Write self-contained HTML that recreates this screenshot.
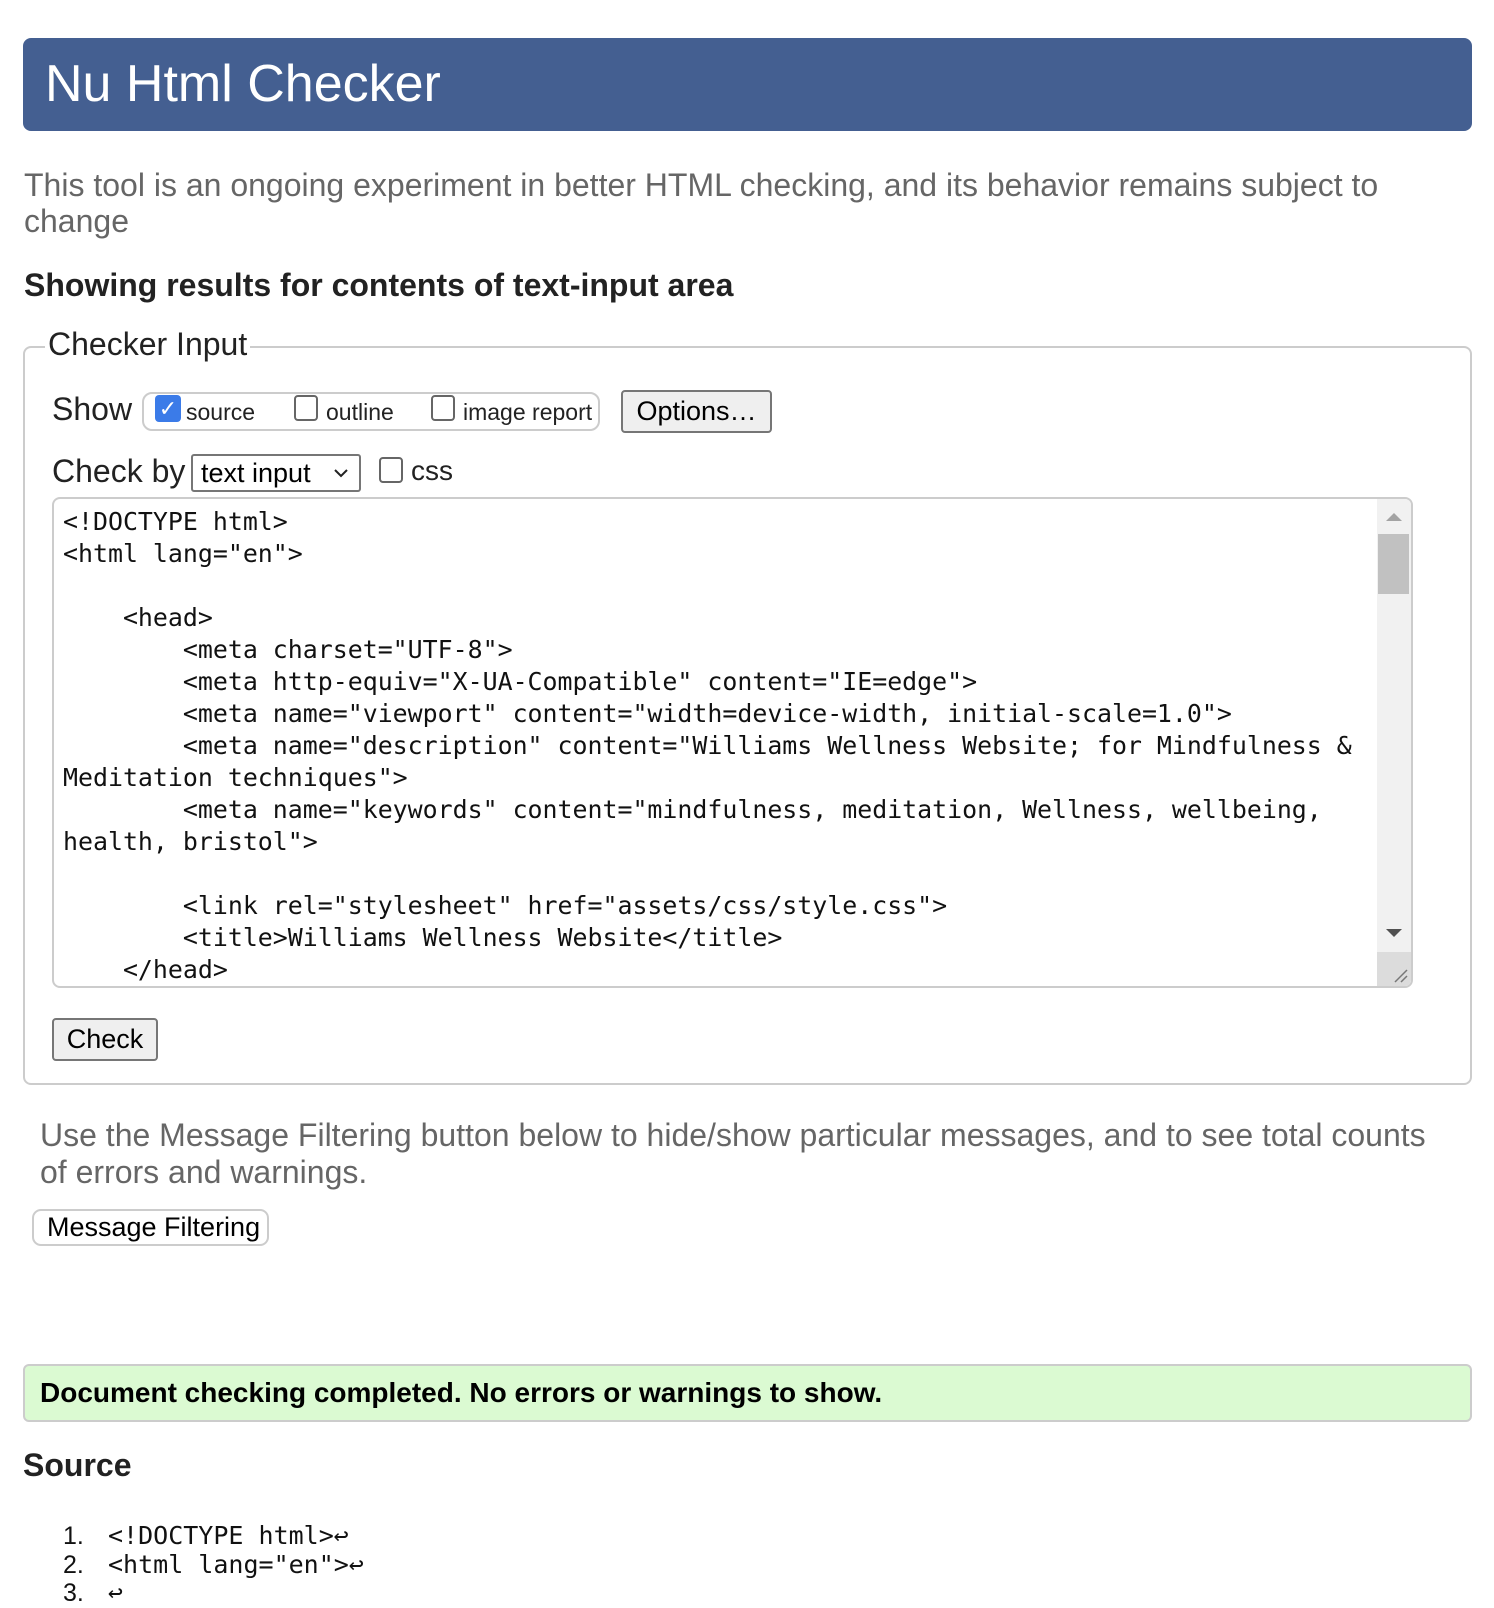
<!DOCTYPE html>
<html><head><meta charset="utf-8"><style>
*{box-sizing:border-box;margin:0;padding:0}
body{width:1494px;height:1594px;overflow:hidden;background:#fff;font-family:"Liberation Sans",Arial,sans-serif;color:#111;position:relative}
.a{position:absolute;white-space:nowrap}
.hdr{left:23px;top:38px;width:1449px;height:93px;background:#445f91;border-radius:8px;color:#fff;font-size:52px;padding-left:22px;line-height:93px}
.mono{font-family:"DejaVu Sans Mono","Liberation Mono",monospace}
.cb{display:inline-block;width:24px;height:26px;border:2px solid #666;border-radius:4px;vertical-align:middle;background:#fff}
.btn{background:#efefef;border:2px solid #767676;border-radius:4px;text-align:center;color:#000}
</style></head><body>
<div class="a hdr">Nu Html Checker</div>
<div class="a" style="left:24px;top:167px;font-size:32px;color:#666;line-height:36px;white-space:normal;width:1420px">This tool is an ongoing experiment in better HTML checking, and its behavior remains subject to change</div>
<div class="a" style="left:24px;top:267px;font-size:32px;font-weight:bold;color:#222">Showing results for contents of text-input area</div>
<div class="a" style="left:23px;top:346px;width:1449px;height:739px;border:2px solid #ccc;border-radius:8px"></div>
<div class="a" style="left:45px;top:326px;background:#fff;padding:0 3px;font-size:32px;color:#222">Checker Input</div>
<div class="a" style="left:52px;top:391px;font-size:32px;color:#222">Show</div>
<div class="a" style="left:142px;top:392px;width:458px;height:39px;border:2px solid #ccc;border-radius:10px"></div>
<div class="a" style="left:155px;top:395px;width:26px;height:27px;background:#3b7be8;border-radius:4px;color:#fff;font-size:22px;text-align:center;line-height:27px">✓</div>
<div class="a" style="left:186px;top:399px;font-size:23px;color:#222">source</div>
<div class="a" style="left:294px;top:395px"><span class="cb"></span></div>
<div class="a" style="left:326px;top:399px;font-size:23px;color:#222">outline</div>
<div class="a" style="left:431px;top:395px"><span class="cb"></span></div>
<div class="a" style="left:463px;top:399px;font-size:23px;color:#222">image report</div>
<div class="a btn" style="left:621px;top:390px;width:151px;height:43px;font-size:27px;line-height:39px">Options…</div>
<div class="a" style="left:52px;top:453px;font-size:32px;color:#222">Check by</div>
<div class="a" style="left:191px;top:454px;width:170px;height:38px;border:2px solid #767676;border-radius:3px;font-size:27px;line-height:34px;padding-left:8px;color:#000">text input<svg style="position:absolute;right:10px;top:12px" width="16" height="10" viewBox="0 0 16 10"><path d="M2 2l6 6 6-6" stroke="#222" stroke-width="2" fill="none"/></svg></div>
<div class="a" style="left:379px;top:457px"><span class="cb"></span></div>
<div class="a" style="left:411px;top:455px;font-size:28px;color:#222">css</div>
<div class="a" style="left:52px;top:497px;width:1361px;height:491px;border:2px solid #ccc;border-radius:8px;overflow:hidden">
<pre class="mono" style="position:absolute;left:9px;top:7px;font-size:24.9px;line-height:32px;color:#111">&lt;!DOCTYPE html&gt;
&lt;html lang="en"&gt;

    &lt;head&gt;
        &lt;meta charset="UTF-8"&gt;
        &lt;meta http-equiv="X-UA-Compatible" content="IE=edge"&gt;
        &lt;meta name="viewport" content="width=device-width, initial-scale=1.0"&gt;
        &lt;meta name="description" content="Williams Wellness Website; for Mindfulness &amp;
Meditation techniques"&gt;
        &lt;meta name="keywords" content="mindfulness, meditation, Wellness, wellbeing,
health, bristol"&gt;

        &lt;link rel="stylesheet" href="assets/css/style.css"&gt;
        &lt;title&gt;Williams Wellness Website&lt;/title&gt;
    &lt;/head&gt;</pre>
<div style="position:absolute;right:0;top:0;width:34px;height:100%;background:#f1f1f1"></div>
<div style="position:absolute;right:2px;top:35px;width:31px;height:60px;background:#c1c1c1"></div>
<div style="position:absolute;right:9px;top:14px;width:0;height:0;border-left:8px solid transparent;border-right:8px solid transparent;border-bottom:8px solid #a3a3a3"></div>
<div style="position:absolute;right:9px;top:430px;width:0;height:0;border-left:8px solid transparent;border-right:8px solid transparent;border-top:8px solid #505050"></div>
<div style="position:absolute;right:0;bottom:0;width:34px;height:34px;background:#dcdcdc"></div>
<svg style="position:absolute;right:2px;bottom:2px" width="18" height="18" viewBox="0 0 18 18"><path d="M16 4L4 16M16 10L10 16" stroke="#777" stroke-width="1.5"/></svg>
</div>
<div class="a btn" style="left:52px;top:1018px;width:106px;height:43px;font-size:27px;line-height:39px">Check</div>
<div class="a" style="left:40px;top:1117px;font-size:32px;color:#666;line-height:37px;white-space:normal;width:1415px">Use the Message Filtering button below to hide/show particular messages, and to see total counts of errors and warnings.</div>
<div class="a" style="left:32px;top:1209px;width:237px;height:37px;border:2px solid #ccc;border-radius:9px;font-size:27px;line-height:33px;padding-left:13px;color:#000">Message Filtering</div>
<div class="a" style="left:23px;top:1364px;width:1449px;height:58px;background:#dbfad2;border:2px solid #ccc;border-radius:6px;font-size:28px;font-weight:bold;line-height:54px;padding-left:15px;color:#000">Document checking completed. No errors or warnings to show.</div>
<div class="a" style="left:23px;top:1447px;font-size:32px;font-weight:bold;color:#222">Source</div>
<div class="a" style="left:63px;top:1522px;font-size:25px;line-height:28.5px;color:#111">
<div><span style="display:inline-block;width:45px">1.</span><span class="mono">&lt;!DOCTYPE html&gt;↩</span></div>
<div><span style="display:inline-block;width:45px">2.</span><span class="mono">&lt;html lang="en"&gt;↩</span></div>
<div><span style="display:inline-block;width:45px">3.</span><span class="mono">↩</span></div>
</div>
</body></html>
